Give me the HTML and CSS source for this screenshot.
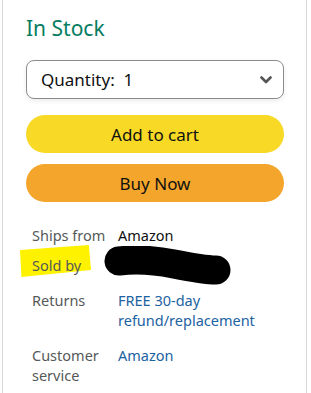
FILE: index.html
```html
<!DOCTYPE html>
<html lang="en">
<head>
    <meta charset="UTF-8">
    <meta name="viewport" content="width=device-width, initial-scale=1.0">
    <title>Buy box</title>
    <link rel="stylesheet" href="styles.css">
</head>
<body>
    <div class="buy-box">
        <div class="stock">In Stock</div>

        <div class="quantity">
            <span>Quantity:&nbsp; 1</span>
            <svg class="chevron" width="12" height="8" viewBox="0 0 12 8">
                <path d="M1.5 1.5 L6 6 L10.5 1.5" fill="none" stroke="#555" stroke-width="2.6" stroke-linecap="round" stroke-linejoin="round"/>
            </svg>
        </div>

        <div class="button add-to-cart">Add to cart</div>
        <div class="button buy-now">Buy Now</div>

        <div class="details">
            <div class="row">
                <div class="label">Ships from</div>
                <div class="value">Amazon</div>
            </div>
            <div class="row sold-by">
                <div class="label">
                    <span class="highlight"></span>
                    <span class="label-text">Sold by</span>
                </div>
                <div class="value">
                    <!-- seller name scribbled out -->
                    <svg class="scribble" width="130" height="42" viewBox="0 0 130 42">
                        <path d="M15 15 Q40 12 70 18 T112 24" fill="none" stroke="#000" stroke-width="29" stroke-linecap="round"/>
                    </svg>
                </div>
            </div>
            <div class="row returns">
                <div class="label">Returns</div>
                <div class="value link">FREE 30-day<br>refund/replacement</div>
            </div>
            <div class="row service">
                <div class="label">Customer<br>service</div>
                <div class="value link">Amazon</div>
            </div>
        </div>
    </div>
</body>
</html>
```

FILE: styles.css
```css
html, body {
    margin: 0;
    background: #ffffff;
}

body {
    font-family: "Noto Sans", "Open Sans", sans-serif;
    color: #0f1111;
}

.buy-box {
    margin-left: 2px;
    width: 305px;
    min-height: 393px;
    box-sizing: border-box;
    border-left: 1px solid #d5d9d9;
    border-right: 1px solid #d5d9d9;
    padding: 13px 22px 0 23px;
}

.stock {
    font-size: 21px;
    line-height: 30px;
    color: #067d62;
}

.quantity {
    margin-top: 17px;
    height: 39px;
    box-sizing: border-box;
    border: 1px solid #888c8c;
    border-radius: 8px;
    display: flex;
    align-items: center;
    justify-content: space-between;
    padding: 0 11px 0 14px;
    font-size: 17px;
    box-shadow: 0 2px 5px rgba(15, 17, 17, 0.08);
}

.chevron {
    display: block;
}

.button {
    height: 38px;
    border-radius: 19px;
    display: flex;
    align-items: center;
    justify-content: center;
    font-size: 17px;
}

.add-to-cart {
    margin-top: 16px;
    background: #f8d925;
}

.buy-now {
    margin-top: 11px;
    background: #f4a52b;
}

.details {
    margin-top: 23px;
    font-size: 14.5px;
    line-height: 20px;
}

.row {
    display: flex;
}

.label {
    width: 92px;
    flex-shrink: 0;
    padding-left: 6px;
    box-sizing: border-box;
    color: #565959;
    position: relative;
}

.value {
    position: relative;
}

.link {
    color: #2162a1;
}

.sold-by {
    margin-top: 10px;
    height: 20px;
}

.highlight {
    position: absolute;
    left: -6px;
    top: -10px;
    width: 71px;
    height: 32px;
    background: #fff200;
    clip-path: polygon(0 16%, 97% 0, 100% 78%, 2% 100%);
}

.label-text {
    position: relative;
}

.scribble {
    position: absolute;
    left: -14px;
    top: -9px;
}

.returns {
    margin-top: 15px;
}

.service {
    margin-top: 15px;
}
```
